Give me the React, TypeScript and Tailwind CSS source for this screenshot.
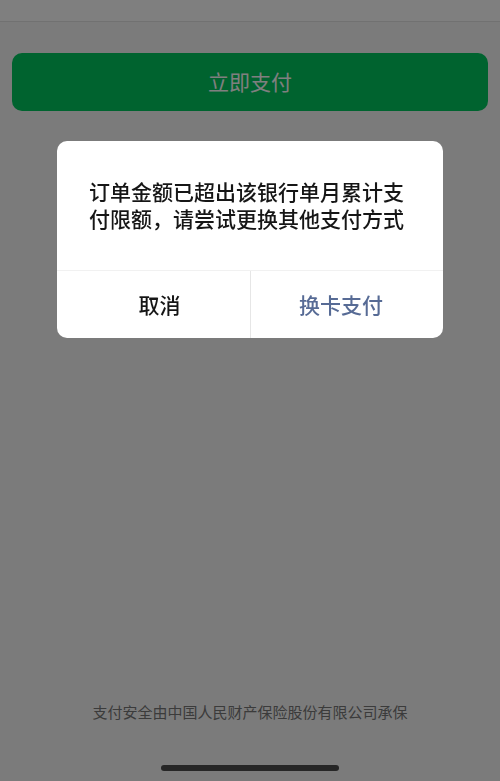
function LimitDialog() {
  return (
    <div className="fixed inset-0 bg-black/50 flex items-start justify-center px-14 pt-[141px]">
      <div
        role="alertdialog"
        aria-modal="true"
        aria-describedby="limit-message"
        className="w-full max-w-[386px] bg-white rounded-[10px] overflow-hidden text-[21px] font-medium"
      >
        <p
          id="limit-message"
          className="px-8 pt-[37px] pb-[38px] leading-[27px] text-[#161616]"
        >
          订单金额已超出该银行单月累计支付限额，请尝试更换其他支付方式
        </p>
        <div className="grid grid-cols-2 border-t border-[#f1f1f1]">
          <button type="button" className="h-[67px] pl-3 text-[#161616]">
            取消
          </button>
          <button
            type="button"
            className="h-[67px] pr-3 border-l border-[#e6e6e6] text-[#576b95]"
          >
            换卡支付
          </button>
        </div>
      </div>
    </div>
  );
}

export default function App() {
  return (
    <div
      lang="zh-CN"
      className="min-h-screen flex flex-col bg-[#f7f7f7] font-['Noto_Sans_CJK_SC',sans-serif]"
    >
      <header className="h-[22px] bg-[#ffffff] border-b border-[#e2e2e2]" />

      <main className="px-3 pt-[31px]">
        <button
          type="button"
          className="w-full h-[58px] rounded-[10px] bg-[#00c65e] text-[21px] text-white"
        >
          立即支付
        </button>
      </main>

      <footer className="mt-auto pb-[58px] text-center text-[15px] leading-[22px] text-[#767676]">
        支付安全由中国人民财产保险股份有限公司承保
      </footer>

      <LimitDialog />

      {/* home indicator */}
      <div className="fixed inset-x-0 bottom-[10px] flex justify-center">
        <div className="w-[178px] h-[6px] rounded-full bg-[#262626]" />
      </div>
    </div>
  );
}
